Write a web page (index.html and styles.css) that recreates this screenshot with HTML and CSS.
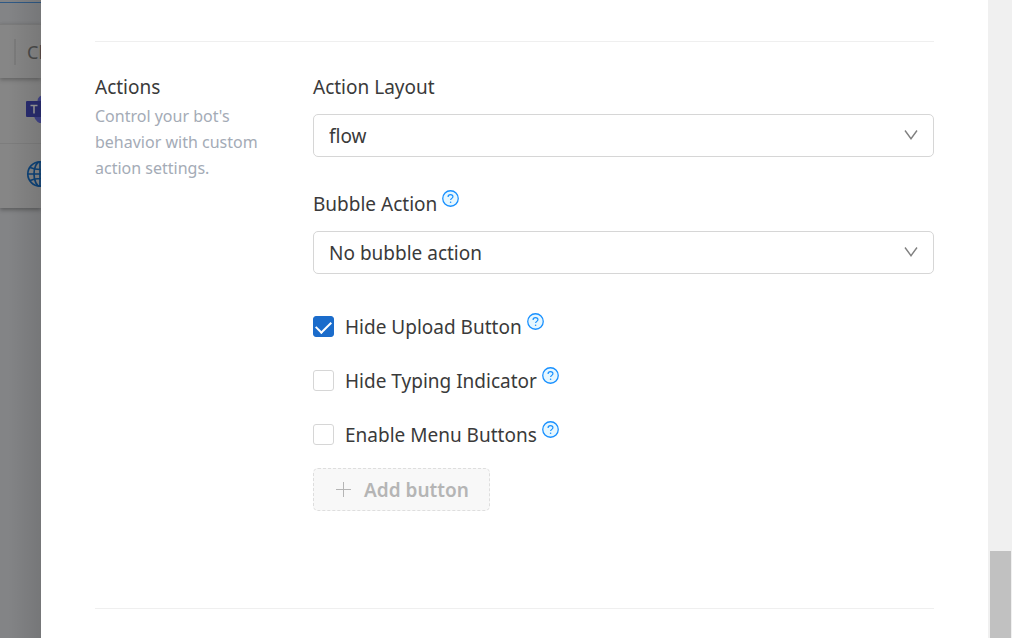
FILE: index.html
```html
<!DOCTYPE html>
<html lang="en">
<head>
    <meta charset="UTF-8">
    <meta name="viewport" content="width=device-width, initial-scale=1.0">
    <title>Channel settings</title>
    <link rel="stylesheet" href="styles.css">
</head>
<body>
    <svg class="sprite" aria-hidden="true">
        <symbol id="help" viewBox="0 0 16 16">
            <circle cx="8" cy="8" r="7.3" fill="#e6f7ff" stroke="#1890ff" stroke-width="1.2"/>
            <path d="M5.7 6.5C5.7 5.1 6.7 4.4 8 4.4s2.3.8 2.3 2c0 1.5-2.2 1.5-2.2 3.1" fill="none" stroke="#1890ff" stroke-width="1.1"/>
            <circle cx="8.1" cy="11.5" r=".75" fill="#1890ff"/>
        </symbol>
        <symbol id="chevron" viewBox="0 0 14 12">
            <path d="M1 1.5L7 9.7L13 1.5" fill="none" stroke="#808080" stroke-width="1.4"/>
        </symbol>
    </svg>

    <div class="layout">
        <div class="backdrop">
            <div class="topbar"></div>
            <div class="channels">
                <div class="channel-head"><span>Channel</span></div>
                <div class="channel-row">
                    <svg width="28" height="28" viewBox="0 0 28 28">
                        <circle cx="17" cy="6" r="5.5" fill="#41448a"/>
                        <path d="M8 9h18v9a9 9 0 0 1-18 3z" fill="#41448a"/>
                        <rect y="6" width="16" height="16" rx="1" fill="#292c70"/>
                        <path d="M4.5 10.5h7M8 10.5v8" stroke="#999" stroke-width="1.6"/>
                    </svg>
                </div>
                <div class="channel-row">
                    <svg width="28" height="28" viewBox="0 0 28 28" fill="none" stroke="#0d4379" stroke-width="1.7">
                        <circle cx="14" cy="14" r="12.2"/>
                        <ellipse cx="14" cy="14" rx="6" ry="12.2"/>
                        <path d="M14 2v24M2 14h24M4 7.5q10 4 20 0M4 20.5q10-4 20 0"/>
                    </svg>
                </div>
            </div>
        </div>

        <main class="drawer">
            <section class="section">
                <div class="intro">
                    <h2>Actions</h2>
                    <p>Control your bot's behavior with custom action settings.</p>
                </div>
                <form class="fields">
                    <div class="field">
                        <label for="layout">Action Layout</label>
                        <div class="select">
                            <select id="layout"><option>flow</option></select>
                            <svg class="chevron"><use href="#chevron"/></svg>
                        </div>
                    </div>
                    <div class="field">
                        <div class="label-row">
                            <label for="bubble">Bubble Action</label>
                            <svg class="help"><use href="#help"/></svg>
                        </div>
                        <div class="select">
                            <select id="bubble"><option>No bubble action</option></select>
                            <svg class="chevron"><use href="#chevron"/></svg>
                        </div>
                    </div>
                    <div class="checks">
                        <div class="label-row">
                            <input type="checkbox" id="upload" checked>
                            <label for="upload">Hide Upload Button</label>
                            <svg class="help"><use href="#help"/></svg>
                        </div>
                        <div class="label-row">
                            <input type="checkbox" id="typing">
                            <label for="typing">Hide Typing Indicator</label>
                            <svg class="help"><use href="#help"/></svg>
                        </div>
                        <div class="label-row">
                            <input type="checkbox" id="menu">
                            <label for="menu">Enable Menu Buttons</label>
                            <svg class="help"><use href="#help"/></svg>
                        </div>
                    </div>
                    <button type="button" class="add-button" disabled>
                        <svg width="16" height="16" viewBox="0 0 16 16"><path d="M7.5 0v15M0 7.5h15" stroke="#b5b5b5"/></svg>
                        Add button
                    </button>
                </form>
            </section>
        </main>

        <div class="scrollbar"><div class="thumb"></div></div>
    </div>
</body>
</html>
```

FILE: styles.css
```css
* {
    box-sizing: border-box;
}
body {
    margin: 0;
    font-family: "Noto Sans", sans-serif;
    font-size: 19px;
    line-height: 26px;
    color: #3a3a3a;
}
.sprite {
    position: absolute;
    width: 0;
    height: 0;
}
.layout {
    display: grid;
    grid-template-columns: 41px 1fr 24px;
    height: 100vh;
    overflow: hidden;
}

/* page dimmed behind the drawer */
.backdrop {
    position: relative;
    overflow: hidden;
    background: #838486;
}
.backdrop::after {
    content: "";
    position: absolute;
    inset: 0;
    background: linear-gradient(to right, transparent 20%, rgba(0, 0, 0, 0.1));
}
.topbar {
    height: 3px;
    border-bottom: 1px solid #2f5985;
}
.channels {
    margin-top: 21px;
    background: #868686;
    box-shadow: 0 2px 4px rgba(0, 0, 0, 0.3);
}
.channel-head {
    display: flex;
    align-items: center;
    height: 54px;
    padding-left: 14px;
    border-top: 1px solid #7b7b7b;
    box-shadow: 0 2px 4px rgba(0, 0, 0, 0.25);
    color: #4b4b4b;
    font-size: 18px;
}
.channel-head span {
    padding-left: 11px;
    border-left: 2px solid #7b7b7b;
}
.channel-row {
    display: flex;
    align-items: center;
    height: 65px;
    padding: 0 0 4px 26px;
}
.channel-row + .channel-row {
    border-top: 1px solid #7d7d7d;
}
.channel-row svg {
    flex: none;
}

.drawer {
    padding: 41px 54px 0;
    background: #fff;
    overflow: hidden;
}
.section {
    display: grid;
    grid-template-columns: 178px 1fr;
    column-gap: 40px;
    padding: 32px 0 97px;
    border-top: 1px solid #efefef;
    border-bottom: 1px solid #efefef;
}
.intro h2 {
    margin: 0;
    font-size: 19px;
    font-weight: 400;
}
.intro p {
    margin: 3px 0 0;
    font-size: 16px;
    line-height: 26px;
    color: #a4abb6;
}
.field {
    margin-bottom: 33px;
}
.field label {
    display: block;
}
.label-row {
    display: flex;
    align-items: center;
}
.help {
    width: 17px;
    height: 17px;
    margin: 0 0 10px 5px;
}
.select {
    position: relative;
    margin-top: 14px;
}
.select select {
    display: block;
    width: 100%;
    height: 43px;
    padding: 0 15px;
    border: 1px solid #d6d6d6;
    border-radius: 5px;
    background: #fff;
    color: inherit;
    font: inherit;
    appearance: none;
}
.chevron {
    position: absolute;
    top: 15px;
    right: 16px;
    width: 14px;
    height: 12px;
    pointer-events: none;
}
.checks {
    display: grid;
    gap: 27px;
    margin: 39px 0 20px;
}
.checks input {
    width: 21px;
    height: 21px;
    margin: 0 11px 0 0;
    border: 1px solid #d6d6d6;
    border-radius: 3px;
    background: #fff;
    appearance: none;
}
.checks input:checked {
    display: grid;
    place-items: center;
    border-color: #1b6ccb;
    background: #1b6ccb;
}
.checks input:checked::before {
    content: "";
    width: 13px;
    height: 7px;
    margin-bottom: 3px;
    border: solid #fff;
    border-width: 0 0 2px 2px;
    transform: rotate(-45deg);
}
.add-button {
    display: flex;
    align-items: center;
    gap: 12px;
    height: 43px;
    padding: 0 20px 0 22px;
    border: 1px dashed #dedede;
    border-radius: 5px;
    background: #f8f8f8;
    color: #b5b5b5;
    font: inherit;
    font-weight: 600;
}

.scrollbar {
    display: flex;
    flex-direction: column;
    justify-content: flex-end;
    padding: 0 1px 0 2px;
    background: #f0f0f0;
}
.thumb {
    height: 87px;
    background: #c1c1c1;
}
```
